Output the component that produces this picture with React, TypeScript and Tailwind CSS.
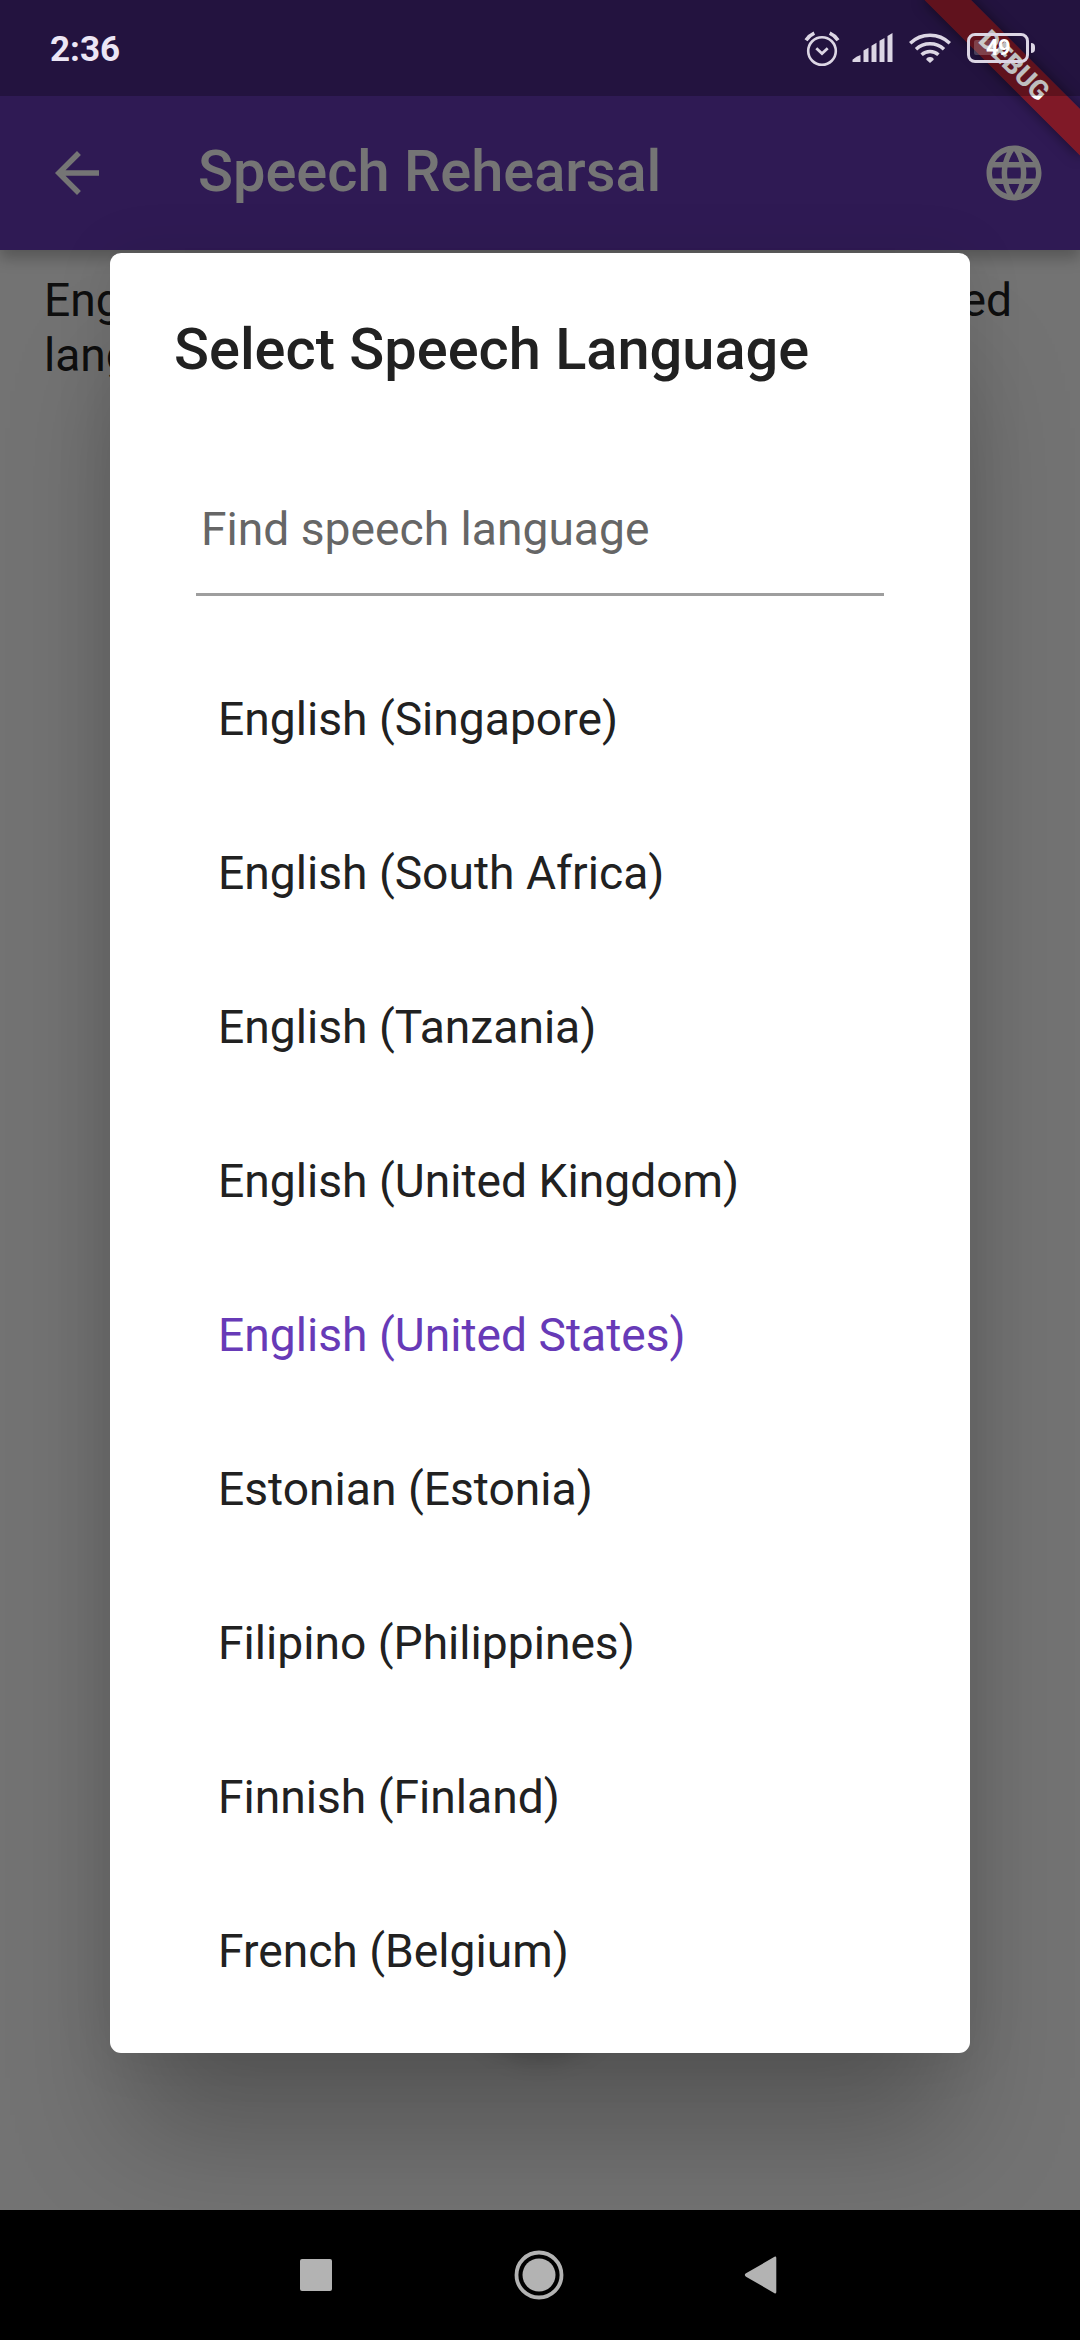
const languages = [
  "English (Singapore)",
  "English (South Africa)",
  "English (Tanzania)",
  "English (United Kingdom)",
  "English (United States)",
  "Estonian (Estonia)",
  "Filipino (Philippines)",
  "Finnish (Finland)",
  "French (Belgium)",
];

const selected = "English (United States)";

function AlarmIcon() {
  return (
    <svg className="h-[36px] w-[36px]" viewBox="0 0 36 36" fill="none" stroke="currentColor">
      <circle cx="18" cy="20" r="13.8" strokeWidth="2.6" />
      <path d="M12.3 17.3l5.7 5.2 5.7-5.2" strokeWidth="2.8" />
      <path d="M2 9.2q3-4.6 8.3-7M34 9.2q-3-4.6-8.3-7" strokeWidth="3.6" />
    </svg>
  );
}

function SignalIcon() {
  return (
    <svg className="h-[30px] w-[41px]" viewBox="0 0 41 30" fill="currentColor">
      <path d="M0.500 29v-2.300q4-3.300 8-4.700v7zM11.500 29v-11.500l5-2.700v14.200zM19.500 29v-16.200l5-3v19.200zM27.500 29v-21.200l5-2.900v24.100zM35.500 29v-26l5-3v29z" />
    </svg>
  );
}

function WifiIcon() {
  return (
    <svg className="h-[32px] w-[42px]" viewBox="0 0 42 32" fill="none" stroke="currentColor" strokeWidth="3.5">
      <path d="M1.200 11.300a28.500 28.500 0 0 1 39.600 0M7 17.300a20.500 20.500 0 0 1 28 0M12.600 22.800a12.600 12.600 0 0 1 16.800 0" />
      <path d="M21 31l-3.700-3.200q0-2.800 3.700-2.800t3.700 2.800z" fill="currentColor" stroke="none" />
    </svg>
  );
}

function Battery() {
  return (
    <div className="flex items-center gap-[2px]">
      <div className="relative flex h-[30px] w-[62px] items-center justify-center rounded-[8px] border-[3.500px] border-[#dcd6e4]">
        <span className="absolute left-[4px] top-[4px] h-[15px] w-[22px] rounded-[2px] bg-white/20" />
        <span className="relative text-[22px] font-bold leading-none tracking-[-0.5px] text-white">49</span>
      </div>
      <span className="h-[10px] w-[4px] rounded-r-full bg-[#dcd6e4]" />
    </div>
  );
}

function StatusBar() {
  return (
    <div className="absolute inset-x-0 top-0 flex h-[96px] items-start justify-between bg-black/25 pl-[50px] pr-[45px] text-[#dcd6e4]">
      <span className="mt-[32px] text-[35px] font-bold leading-[36px] text-[#ece6f5]">2:36</span>
      <div className="mt-[31px] flex items-start">
        <AlarmIcon />
        <div className="ml-[12px] mt-[2px]"><SignalIcon /></div>
        <div className="ml-[16px] mt-[1px]"><WifiIcon /></div>
        <div className="ml-[16px] mt-[2px]"><Battery /></div>
      </div>
    </div>
  );
}

function AppBar() {
  return (
    <header className="relative z-10 flex h-[250px] items-center bg-[#673ab7] pl-[44px] pr-[33px] pt-[96px] text-white shadow-[0_8px_14px_rgba(0,0,0,0.25)]">
      <svg className="h-[66px] w-[66px]" viewBox="0 0 24 24" fill="currentColor">
        <path d="M20 11H7.830l5.590-5.590L12 4l-8 8 8 8 1.410-1.410L7.830 13H20v-2z" />
      </svg>
      <h1 className="mb-[5px] ml-[88px] text-[57.750px] font-medium leading-[64px]">Speech Rehearsal</h1>
      <svg className="ml-auto h-[66px] w-[66px]" viewBox="0 0 24 24" fill="currentColor">
        <path d="M11.990 2C6.470 2 2 6.480 2 12s4.470 10 9.990 10C17.520 22 22 17.520 22 12S17.520 2 11.990 2zm6.930 6h-2.950c-.32-1.250-.78-2.450-1.380-3.560 1.840.63 3.370 1.910 4.330 3.560zM12 4.040c.83 1.200 1.480 2.530 1.910 3.960h-3.820c.43-1.430 1.080-2.760 1.910-3.960zM4.260 14C4.100 13.360 4 12.690 4 12s.1-1.360.26-2h3.380c-.08.66-.14 1.320-.14 2s.06 1.340.14 2H4.260zm.82 2h2.950c.32 1.250.78 2.450 1.380 3.560-1.840-.63-3.370-1.900-4.330-3.560zm2.950-8H5.080c.96-1.660 2.490-2.930 4.330-3.560C8.810 5.550 8.350 6.750 8.030 8zM12 19.960c-.83-1.200-1.480-2.530-1.910-3.960h3.820c-.43 1.430-1.080 2.760-1.910 3.960zM14.340 14H9.660c-.09-.66-.16-1.320-.16-2s.07-1.350.16-2h4.680c.09.65.16 1.320.16 2s-.07 1.340-.16 2zm.25 5.560c.6-1.110 1.060-2.310 1.380-3.560h2.950c-.96 1.650-2.490 2.930-4.330 3.560zM16.360 14c.08-.66.14-1.320.14-2s-.06-1.340-.14-2h3.380c.16.64.26 1.310.26 2s-.1 1.360-.26 2h-3.380z" />
      </svg>
    </header>
  );
}

function LanguageDialog() {
  return (
    <section className="flex h-[1800px] w-[860px] flex-col rounded-[11px] bg-white pb-[25px] text-[#212121] shadow-[0_100px_110px_-20px_rgba(0,0,0,0.25),0_0_60px_rgba(0,0,0,0.09)]">
      <h2 className="mt-[62px] pl-[64px] text-[57.750px] font-medium leading-[68px]">Select Speech Language</h2>
      <div className="ml-[86px] mr-[86px] mt-[104px] h-[109px] border-b-[3px] border-[#9e9e9e] pl-[5px] text-[46.200px] leading-[55px] text-[#666666]">
        <div className="pt-[15px]">Find speech language</div>
      </div>
      <ul className="mt-auto">
        {languages.map((name) => (
          <li
            key={name}
            className={
              name === selected
                ? "flex h-[154px] items-center pl-[108px] text-[46.200px] leading-[55px] text-[#673ab7]"
                : "flex h-[154px] items-center pl-[108px] text-[46.200px] leading-[55px]"
            }
          >
            {name}
          </li>
        ))}
      </ul>
    </section>
  );
}

function DebugBanner() {
  return (
    <div className="absolute right-0 top-0 h-[240px] w-[240px] overflow-hidden">
      <div className="absolute left-[130px] top-[77px] flex h-[33px] w-[220px] origin-[110px_-77px] rotate-45 items-center justify-center bg-[#b01a0c]/63 text-[27px] font-extrabold leading-none text-white shadow-[0_0_14px_rgba(0,0,0,0.5)]">
        DEBUG
      </div>
    </div>
  );
}

function NavigationBar() {
  return (
    <nav className="absolute inset-x-0 bottom-0 flex h-[130px] items-center bg-black text-[#b3b3b3]">
      <span className="ml-[300px] h-[32px] w-[32px] rounded-[2px] bg-current" />
      <svg className="ml-[182px] h-[50px] w-[50px]" viewBox="0 0 50 50" fill="none">
        <circle cx="25" cy="25" r="22.500" stroke="currentColor" strokeWidth="3.800" />
        <circle cx="25" cy="25" r="16.500" fill="currentColor" />
      </svg>
      <svg className="ml-[180px] h-[38px] w-[34px]" viewBox="0 0 34 38" fill="currentColor">
        <path d="M2 17.300L30.500 .8q1.800-.8 1.800 1.200v34q0 2-1.800 1.200L2 20.700q-2.400-1.700 0-3.400z" />
      </svg>
    </nav>
  );
}

export default function App() {
  return (
    <div className="relative h-[2340px] w-[1080px] overflow-hidden bg-[#fafafa] font-['Roboto',sans-serif]">
      <AppBar />
      <main className="px-[44px] pt-[23px] text-[46.200px] leading-[54.500px] text-[#212121]">
        <div className="flex justify-between pr-[24px]">
          <span>English</span>
          <span>selected</span>
        </div>
        <div>language</div>
      </main>
      <button
        type="button"
        aria-label="Record"
        className="absolute left-1/2 top-[1887px] size-[154px] -translate-x-1/2 rounded-full bg-[#673ab7] shadow-[0_16px_24px_rgba(0,0,0,0.25)]"
      />
      <div className="absolute inset-0 z-20 flex justify-center bg-black/54 pt-[253px]">
        <LanguageDialog />
      </div>
      <div className="absolute inset-0 z-30">
        <DebugBanner />
        <StatusBar />
        <NavigationBar />
      </div>
    </div>
  );
}
